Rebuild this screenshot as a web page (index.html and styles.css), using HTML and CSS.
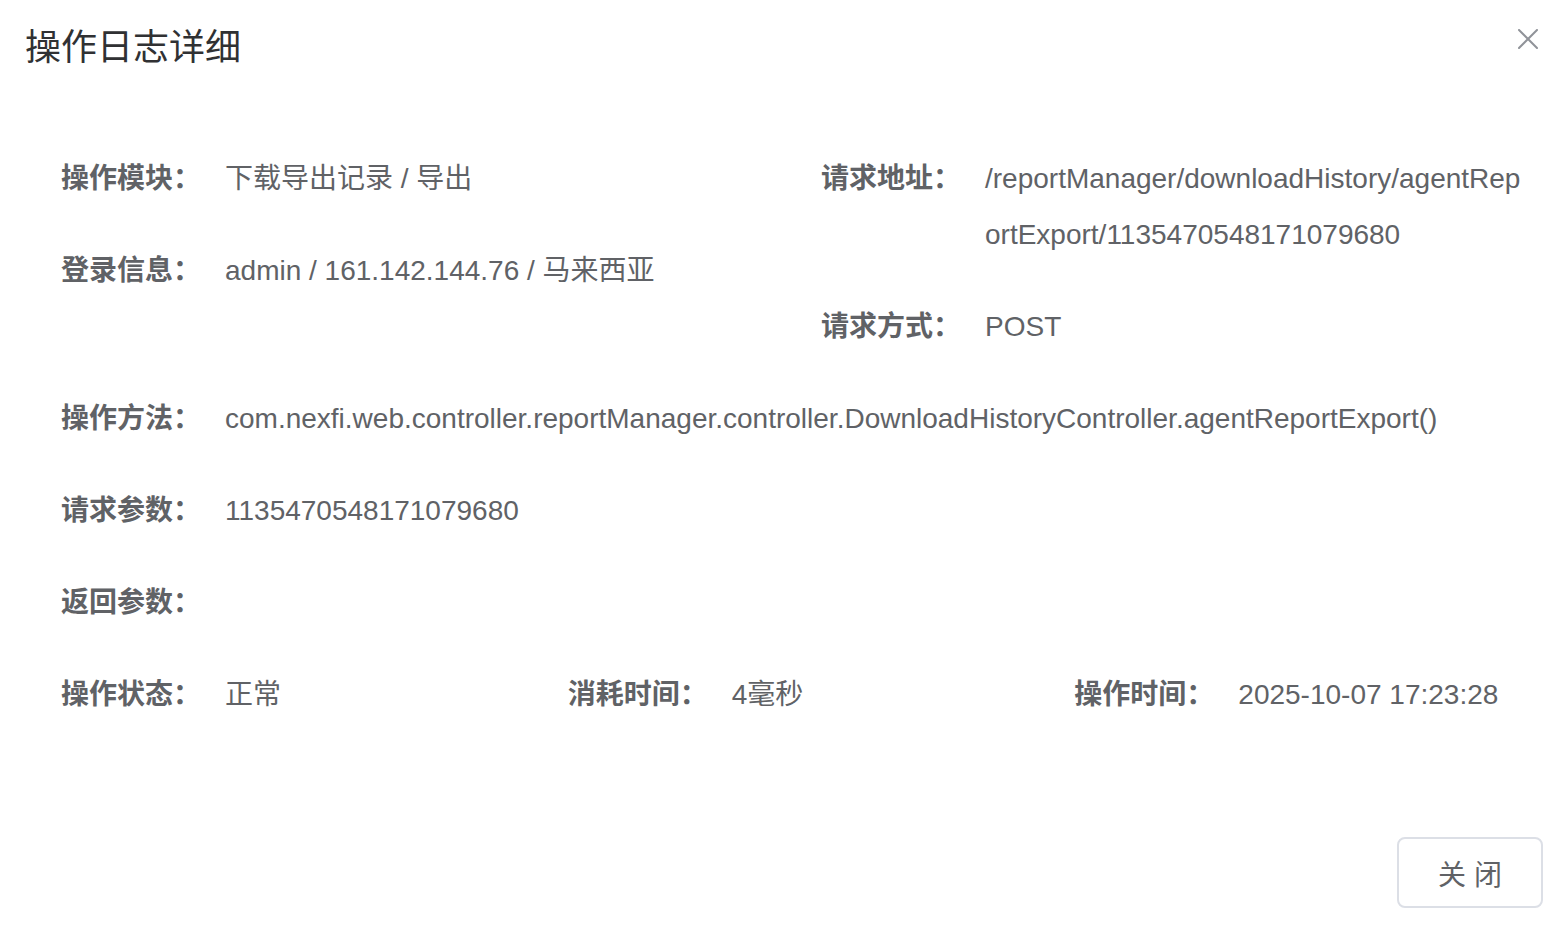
FILE: index.html
```html
<!DOCTYPE html>
<html lang="zh-CN">
<head>
<meta charset="utf-8">
<title>操作日志详细</title>
<link rel="stylesheet" href="styles.css">
</head>
<body>
<div class="dialog">
  <div class="dialog-header">
    <span class="dialog-title">操作日志详细</span>
    <button class="dialog-close" aria-label="Close">
      <svg width="20" height="20" viewBox="0 0 20 20"><path d="M1 1L19 19M19 1L1 19" stroke="#909399" stroke-width="2" stroke-linecap="round" fill="none"/></svg>
    </button>
  </div>
  <div class="form">
    <div class="row cols-2">
      <div class="col">
        <div class="item"><span class="label">操作模块：</span><span class="value">下载导出记录 / 导出</span></div>
        <div class="item"><span class="label">登录信息：</span><span class="value">admin / 161.142.144.76 / 马来西亚</span></div>
      </div>
      <div class="col">
        <div class="item"><span class="label">请求地址：</span><span class="value">/reportManager/downloadHistory/agentReportExport/1135470548171079680</span></div>
        <div class="item"><span class="label">请求方式：</span><span class="value">POST</span></div>
      </div>
    </div>
    <div class="row">
      <div class="col">
        <div class="item"><span class="label">操作方法：</span><span class="value">com.nexfi.web.controller.reportManager.controller.DownloadHistoryController.agentReportExport()</span></div>
        <div class="item"><span class="label">请求参数：</span><span class="value">1135470548171079680</span></div>
        <div class="item"><span class="label">返回参数：</span><span class="value"></span></div>
      </div>
    </div>
    <div class="row cols-3">
      <div class="col">
        <div class="item"><span class="label">操作状态：</span><span class="value">正常</span></div>
      </div>
      <div class="col">
        <div class="item"><span class="label">消耗时间：</span><span class="value">4毫秒</span></div>
      </div>
      <div class="col">
        <div class="item"><span class="label">操作时间：</span><span class="value">2025-10-07 17:23:28</span></div>
      </div>
    </div>
  </div>
  <div class="dialog-footer">
    <button class="btn">关 闭</button>
  </div>
</div>
</body>
</html>
```
FILE: styles.css
```css
* { box-sizing: border-box; }
html, body {
  margin: 0;
  padding: 0;
  background: #ffffff;
}
body {
  font-family: "Liberation Sans", "Noto Sans CJK SC", sans-serif;
  color: #606266;
}
.dialog {
  width: 1566px;
  height: 928px;
  background: #ffffff;
}
.dialog-header {
  display: flex;
  justify-content: space-between;
  align-items: flex-start;
  padding: 23px 28px 0 25px;
}
.dialog-title {
  font-size: 36px;
  line-height: 50px;
  color: #303133;
}
.dialog-close {
  border: none;
  background: transparent;
  padding: 0;
  margin-top: 6px;
  width: 20px;
  height: 20px;
  cursor: pointer;
  display: flex;
}
.form {
  width: 1520px;
  margin: 78px 0 0 41px;
}
.row {
  display: grid;
  grid-template-columns: 1fr;
}
.row.cols-2 { grid-template-columns: 1fr 1fr; }
.row.cols-3 { grid-template-columns: 1fr 1fr 1fr; }
.col {
  padding: 0 20px;
  min-width: 0;
}
.row.cols-2 .col {
  padding-right: 32px;
}
.item {
  display: flex;
  font-size: 28px;
  line-height: 56px;
  margin-bottom: 36px;
  min-height: 56px;
}
.label {
  flex: none;
  width: 164px;
  font-weight: bold;
  color: #606266;
}
.value {
  flex: 1;
  min-width: 0;
  word-break: break-all;
  color: #606266;
}
.dialog-footer {
  display: flex;
  justify-content: flex-end;
  padding: 78px 23px 0 0;
}
.btn {
  width: 146px;
  height: 71px;
  border: 2px solid #dcdfe6;
  border-radius: 8px;
  background: #ffffff;
  font-family: "Liberation Sans", "Noto Sans CJK SC", sans-serif;
  font-size: 28px;
  color: #606266;
  cursor: pointer;
}
```
